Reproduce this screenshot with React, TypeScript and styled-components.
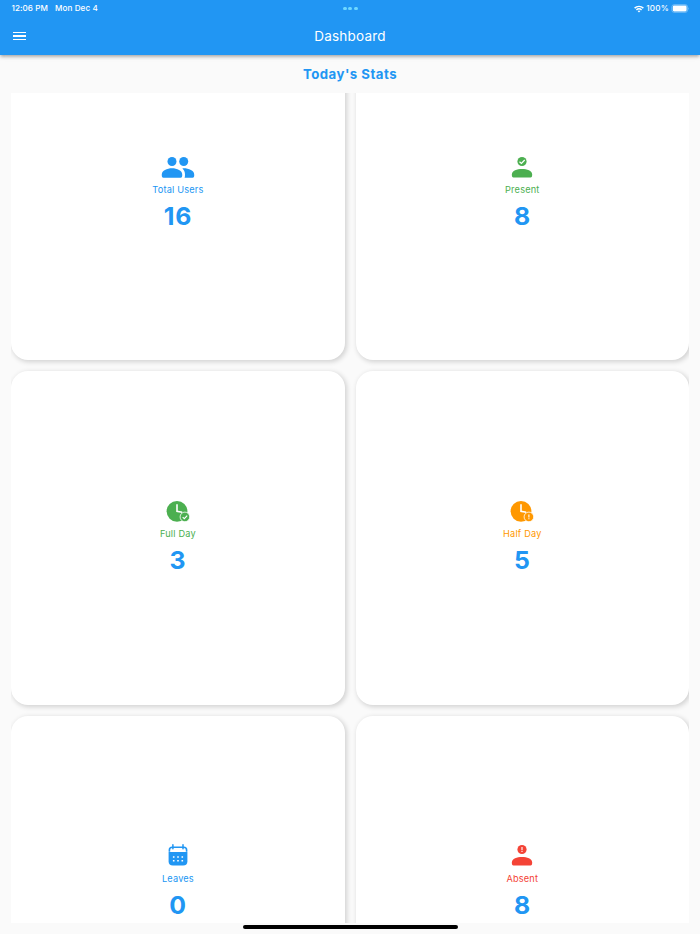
import styled, { createGlobalStyle } from 'styled-components';
import type { ReactNode } from 'react';

//type
interface StatCardProps {
  label: string;
  value: number;
  color: string;
  icon: ReactNode;
}

//colors
const colors = {
  blue: '#2196f3',
  green: '#4caf50',
  orange: '#ff9800',
  red: '#f44336',
  background: '#fafafa',
};

//styled component
const GlobalStyle = createGlobalStyle`
  * {
    box-sizing: border-box;
  }
  body {
    margin: 0;
    overflow: hidden;
    background: ${colors.background};
    font-family: Inter, 'Liberation Sans', sans-serif;
  }
`;

const Screen = styled.div`
  display: flex;
  flex-direction: column;
  width: 700px;
  height: 934px;
  overflow: hidden;
  background: ${colors.background};
`;

const Header = styled.header`
  flex: none;
  height: 55px;
  color: #fff;
  background: ${colors.blue};
  box-shadow: 0 1.4px 2.7px -0.7px rgba(0, 0, 0, 0.2), 0 2.7px 3.4px rgba(0, 0, 0, 0.14), 0 0.7px 6.8px rgba(0, 0, 0, 0.12);
`;

const StatusBar = styled.div`
  display: grid;
  grid-template-columns: 1fr auto 1fr;
  align-items: center;
  height: 17px;
  padding: 0 11px 0 11.5px;
  font-size: 8.1px;
  font-weight: 500;
  line-height: 17px;
  letter-spacing: 0.08px;
`;

const Clock = styled.div`
  display: flex;
  gap: 7px;
`;

const Multitask = styled.div`
  display: flex;
  gap: 1.9px;
  & span {
    width: 3.7px;
    height: 3.7px;
    border-radius: 50%;
    background: #6fd8ff;
  }
`;

const Indicators = styled.div`
  display: flex;
  align-items: center;
  justify-content: flex-end;
  gap: 2px;
  & span {
    letter-spacing: 0.25px;
  }
`;

const AppBar = styled.div`
  display: grid;
  grid-template-columns: 1fr auto 1fr;
  align-items: center;
  height: 38px;
  padding: 0 13px;
`;

const MenuButton = styled.button`
  display: flex;
  flex-direction: column;
  gap: 2px;
  width: 13px;
  padding: 0;
  border: 0;
  background: none;
  & span {
    height: 1.5px;
    background: #fff;
  }
`;

const Title = styled.h1`
  margin: 0;
  font-size: 13.5px;
  font-weight: 400;
  line-height: 38px;
  letter-spacing: 0.2px;
`;

const SectionTitle = styled.h2`
  flex: none;
  height: 38px;
  margin: 0;
  color: ${colors.blue};
  font-size: 13.2px;
  font-weight: 700;
  line-height: 38px;
  letter-spacing: 0.5px;
  text-align: center;
`;

const StatsViewport = styled.main`
  flex: none;
  height: 830px;
  margin: 0 11px 0 11.2px;
  overflow: hidden;
`;

const StatsGrid = styled.div`
  display: grid;
  grid-template-columns: 1fr 1fr;
  grid-auto-rows: 333.6px;
  gap: 10.9px 11px;
  margin-top: -66.2px;
`;

const Card = styled.section`
  display: flex;
  flex-direction: column;
  align-items: center;
  padding-top: 126.7px;
  border-radius: 17px;
  background: #fff;
  box-shadow: 1.4px 1.4px 5px rgba(0, 0, 0, 0.16);
`;

const IconBox = styled.svg`
  display: block;
  width: 40px;
  height: 28px;
`;

const Label = styled.div<{ $color: string }>`
  height: 16px;
  margin-top: 0.4px;
  color: ${(props) => props.$color};
  font-size: 9.2px;
  line-height: 16px;
  letter-spacing: 0.19px;
`;

const Value = styled.div`
  height: 36px;
  color: ${colors.blue};
  font-size: 24.8px;
  font-weight: 700;
  line-height: 36px;
  letter-spacing: 0.9px;
  text-indent: 0.3px;
`;

const BottomBar = styled.footer`
  display: flex;
  justify-content: center;
  height: 11px;
  padding-top: 1.5px;
`;

const HomeIndicator = styled.div`
  width: 215px;
  height: 4px;
  border-radius: 2px;
  background: #000;
`;

function WifiIcon() {
  return (
    <svg width="10" height="8" viewBox="0 0 10 8" fill="none" stroke="#fff" strokeWidth="1.45">
      <path d="M.6 3.1C3.1.8 6.9.8 9.4 3.1M2.4 4.9C3.9 3.6 6.1 3.6 7.6 4.9" />
      <path d="M3.6 6.1Q5 5 6.4 6.1L5 7.5Z" fill="#fff" stroke="none" />
    </svg>
  );
}

function BatteryIcon() {
  return (
    <svg width="18" height="9" viewBox="0 0 18 9">
      <rect x=".8" y=".6" width="15.8" height="7.8" rx="2.4" fill="none" stroke="#fff" strokeOpacity=".4" strokeWidth=".8" />
      <rect x="1.8" y="1.6" width="13.8" height="5.8" rx="1.3" fill="#fff" />
      <path d="M17.1 3.2Q18.2 4.5 17.1 5.8Z" fill="#fff" fillOpacity=".5" />
    </svg>
  );
}

function UsersIcon() {
  return (
    <IconBox viewBox="0 0 40 28" fill={colors.blue}>
      <circle cx="14" cy="7.5" r="4.5" />
      <circle cx="25.7" cy="7.5" r="4.5" />
      <path d="M3.8 22.1V20.4C3.8 16.6 9 14.3 14 14.3S24.2 16.6 24.2 20.4V22.1Q24.2 23.7 22.6 23.7H5.4Q3.8 23.7 3.8 22.1Z" />
      <path d="M24.4 14.4C30 14 36.2 16.5 36.2 20.4V22.1Q36.2 23.7 34.6 23.7H26.5Q27 22.9 27 20.4C27 17.8 26 15.9 24.4 14.4Z" />
    </IconBox>
  );
}

function PersonIcon({ color, children }: { color: string; children: ReactNode }) {
  return (
    <IconBox viewBox="0 0 40 28" fill={color}>
      <circle cx="20" cy="7.5" r="4.6" />
      <path d="M9.9 21.8V20.2C9.9 16.8 15 15 20 15S30.1 16.8 30.1 20.2V21.8Q30.1 23.4 28.6 23.4H11.4Q9.9 23.4 9.9 21.8Z" />
      {children}
    </IconBox>
  );
}

function ClockIcon({ color, children }: { color: string; children: ReactNode }) {
  return (
    <IconBox viewBox="0 0 40 28" fill={color}>
      <circle cx="19" cy="13.3" r="10.4" />
      <path d="M19 6.2V13.4L24.2 14.3" fill="none" stroke="#fff" strokeWidth="1.6" />
      <circle cx="26.9" cy="18.9" r="4.8" stroke="#fff" strokeWidth=".8" />
      {children}
    </IconBox>
  );
}

function CalendarIcon() {
  return (
    <IconBox viewBox="0 0 40 28" fill={colors.blue}>
      <path d="M14.9 2.8V6.8M25 2.8V6.8" stroke={colors.blue} strokeWidth="1.5" strokeLinecap="round" />
      <path d="M11.4 9.8V8Q11.4 5.2 14.2 5.2H25.8Q28.6 5.2 28.6 8V9.8" fill="none" stroke={colors.blue} strokeWidth="1.6" />
      <path d="M10.6 10H29.4V19.2Q29.4 23.5 25.1 23.5H14.9Q10.6 23.5 10.6 19.2Z" />
      <path d="M14.9 14.2h1.6v1.5h-1.6zM19.2 14.2h1.6v1.5h-1.6zM23.5 14.2h1.6v1.5h-1.6zM14.9 17.9h1.6v1.5h-1.6zM19.2 17.9h1.6v1.5h-1.6zM23.5 17.9h1.6v1.5h-1.6z" fill="#fff" />
    </IconBox>
  );
}

function StatCard({ label, value, color, icon }: StatCardProps) {
  return (
    <Card>
      {icon}
      <Label $color={color}>{label}</Label>
      <Value>{value}</Value>
    </Card>
  );
}

const presentIcon = (
  <PersonIcon color={colors.green}>
    <path d="M17.5 7.7L19.4 9.4L22.7 6" fill="none" stroke="#fff" strokeWidth="1.2" />
  </PersonIcon>
);

const absentIcon = (
  <PersonIcon color={colors.red}>
    <path d="M20 5V8.1M20 8.8V9.9" fill="none" stroke="#fff" strokeWidth="1.1" />
  </PersonIcon>
);

const fullDayIcon = (
  <ClockIcon color={colors.green}>
    <path d="M24.7 19.1L26.3 20.7L29.2 17.6" fill="none" stroke="#fff" strokeWidth="1.1" />
  </ClockIcon>
);

const halfDayIcon = (
  <ClockIcon color={colors.orange}>
    <path d="M26.9 16.4V19.5M26.9 20.2V21.3" fill="none" stroke="#fff" strokeWidth="1.1" />
  </ClockIcon>
);

const stats: StatCardProps[] = [
  { label: 'Total Users', value: 16, color: colors.blue, icon: <UsersIcon /> },
  { label: 'Present', value: 8, color: colors.green, icon: presentIcon },
  { label: 'Full Day', value: 3, color: colors.green, icon: fullDayIcon },
  { label: 'Half Day', value: 5, color: colors.orange, icon: halfDayIcon },
  { label: 'Leaves', value: 0, color: colors.blue, icon: <CalendarIcon /> },
  { label: 'Absent', value: 8, color: colors.red, icon: absentIcon },
];

function App() {
  return (
    <Screen>
      <GlobalStyle />
      <Header>
        <StatusBar>
          <Clock>
            <span>12:06 PM</span>
            <span>Mon Dec 4</span>
          </Clock>
          <Multitask>
            <span />
            <span />
            <span />
          </Multitask>
          <Indicators>
            <WifiIcon />
            <span>100%</span>
            <BatteryIcon />
          </Indicators>
        </StatusBar>
        <AppBar>
          <MenuButton aria-label="Menu">
            <span />
            <span />
            <span />
          </MenuButton>
          <Title>Dashboard</Title>
        </AppBar>
      </Header>
      <SectionTitle>Today's Stats</SectionTitle>
      <StatsViewport>
        <StatsGrid>
          {stats.map((stat) => (
            <StatCard key={stat.label} {...stat} />
          ))}
        </StatsGrid>
      </StatsViewport>
      <BottomBar>
        <HomeIndicator />
      </BottomBar>
    </Screen>
  );
}

export default App;
